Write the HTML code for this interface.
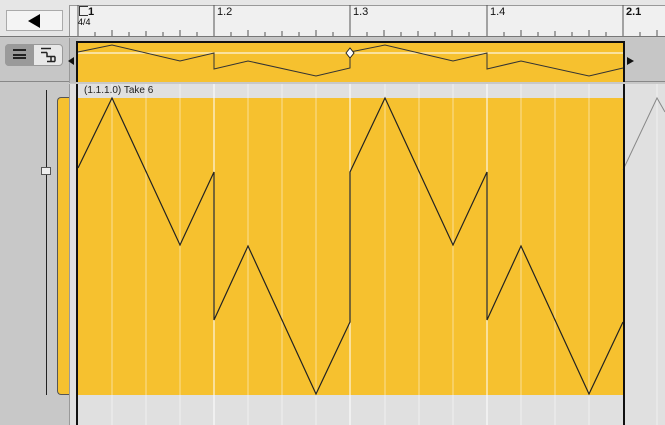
<html><head><style>
body{margin:0;width:665px;height:425px;overflow:hidden;background:#c8c8c8;font-family:"Liberation Sans",sans-serif;position:relative}
div{position:absolute;box-sizing:border-box}
.t{font-size:11px;color:#111}
</style></head><body>
<div style="left:0;top:0;width:665px;height:37px;background:#e6e6e6;border-bottom:1px solid #777"></div>
<div style="left:6px;top:10px;width:57px;height:21px;background:#f4f4f4;border:1px solid #aaa"></div>
<div style="left:28px;top:14px;width:0;height:0;border-top:7px solid transparent;border-bottom:7px solid transparent;border-right:12px solid #000"></div>
<div style="left:69px;top:5px;width:596px;height:31px;background:#f0f0f0;border-left:1px solid #999;border-top:1px solid #999"></div>
<svg style="position:absolute;left:0;top:0" width="665" height="425">
<g stroke="#555" stroke-width="1">
<path d="M78 5V36M214 5V36M350 5V36M487 5V36M623 5V36"/>
<path d="M95 32V36M112 30V36M129 32V36M146 31V36M163 32V36M180 30V36M197 32V36M231 32V36M248 30V36M265 32V36M282 31V36M299 32V36M316 30V36M333 32V36M367 32V36M384 30V36M401 32V36M418 31V36M435 32V36M452 30V36M469 32V36M504 32V36M521 30V36M538 32V36M555 31V36M572 32V36M589 30V36M606 32V36M640 32V36M657 30V36"/>
</g>
</svg>
<div class="t" style="left:88px;top:6px;font-weight:bold">1</div>
<div class="t" style="left:79px;top:6px;width:9px;height:10px;border:1px solid #333;border-right:none"></div>
<div style="left:78px;top:17px;font-size:9px">4/4</div>
<div class="t" style="left:217px;top:6px">1.2</div>
<div class="t" style="left:353px;top:6px">1.3</div>
<div class="t" style="left:490px;top:6px">1.4</div>
<div class="t" style="left:626px;top:6px;font-weight:bold">2.1</div>
<div style="left:0;top:38px;width:665px;height:44px;background:#c6c6c6;border-bottom:1px solid #888"></div>
<div style="left:5px;top:44px;width:58px;height:22px;background:#e8e8e8;border:1px solid #999;border-radius:4px"></div>
<div style="left:5px;top:44px;width:29px;height:22px;background:#9a9a9a;border-radius:4px 0 0 4px"></div>
<div style="left:13px;top:49px;width:13px;height:10px;border:2px solid #222;border-left:none;border-right:none;background:linear-gradient(#222,#222) 0 3px/100% 2px no-repeat"></div>
<svg style="position:absolute;left:40px;top:47px" width="16" height="16"><path d="M1 1.5H11M1 5.5H7M7 5.5V9.5H12M11 9.5V14.5M7 9.5H15M7 14.5H15M15 9.5V14.5" stroke="#222" stroke-width="1.5" fill="none"/></svg>
<div style="left:69px;top:38px;width:9px;height:45px;background:#c0c0c0;border-left:1px solid #999"></div>
<div style="left:76px;top:41px;width:549px;height:41px;background:#f6c12f;border:2px solid #111;border-bottom:none;border-right:2px solid #111"></div>
<div style="left:0;top:84px;width:69px;height:341px;background:#c8c8c8"></div>
<div style="left:69px;top:84px;width:596px;height:341px;background:#e0e0e0;border-left:1px solid #999"></div>
<div style="left:78px;top:98px;width:545px;height:297px;background:#f6c12f"></div>
<div style="left:57px;top:97px;width:12px;height:298px;background:#f6c12f;border:1px solid #555;border-right:none;border-radius:4px 0 0 4px"></div>
<div style="left:46px;top:90px;width:1px;height:305px;background:#222"></div>
<div style="left:41px;top:167px;width:10px;height:8px;background:#eee;border:1px solid #555"></div>
<svg style="position:absolute;left:0;top:0" width="665" height="425">
<g stroke="#fff" stroke-width="1" opacity=".5">
<path d="M112 84V425M146 84V425M180 84V425M248 84V425M282 84V425M316 84V425M385 84V425M419 84V425M453 84V425M521 84V425M555 84V425M589 84V425M657 84V425"/></g>
<g stroke="#fff" stroke-width="1.2" opacity=".85"><path d="M214 84V425M350 84V425M487 84V425"/><path d="M78 53H623" /></g>
<path fill="none" stroke="#222" stroke-width="1.2" d="M78 168L112 98L180 245L214 172V320L248 246L316 394L350 322V172L385 98L453 245L487 172V320L521 246L589 394L623 322"/>
<path fill="none" stroke="#888" d="M623 170L657 98L665 112"/>
<path fill="none" stroke="#333" d="M78 52L112 45L180 61L214 53V69L248 61L316 76L350 68V52L385 45L453 61L487 53V69L521 61L589 76L623 68"/>
<path d="M346 53L350 48L354 53L350 58Z" fill="#fff" stroke="#222"/>
<path d="M68 61L74 57V65Z M627 57L634 61L627 65Z" fill="#111"/>
<path d="M77 84V425M624 84V425" stroke="#111" stroke-width="2"/>
</svg>
<div style="left:84px;top:85px;font-size:10px;color:#222">(1.1.1.0) Take 6</div>
</body></html>
